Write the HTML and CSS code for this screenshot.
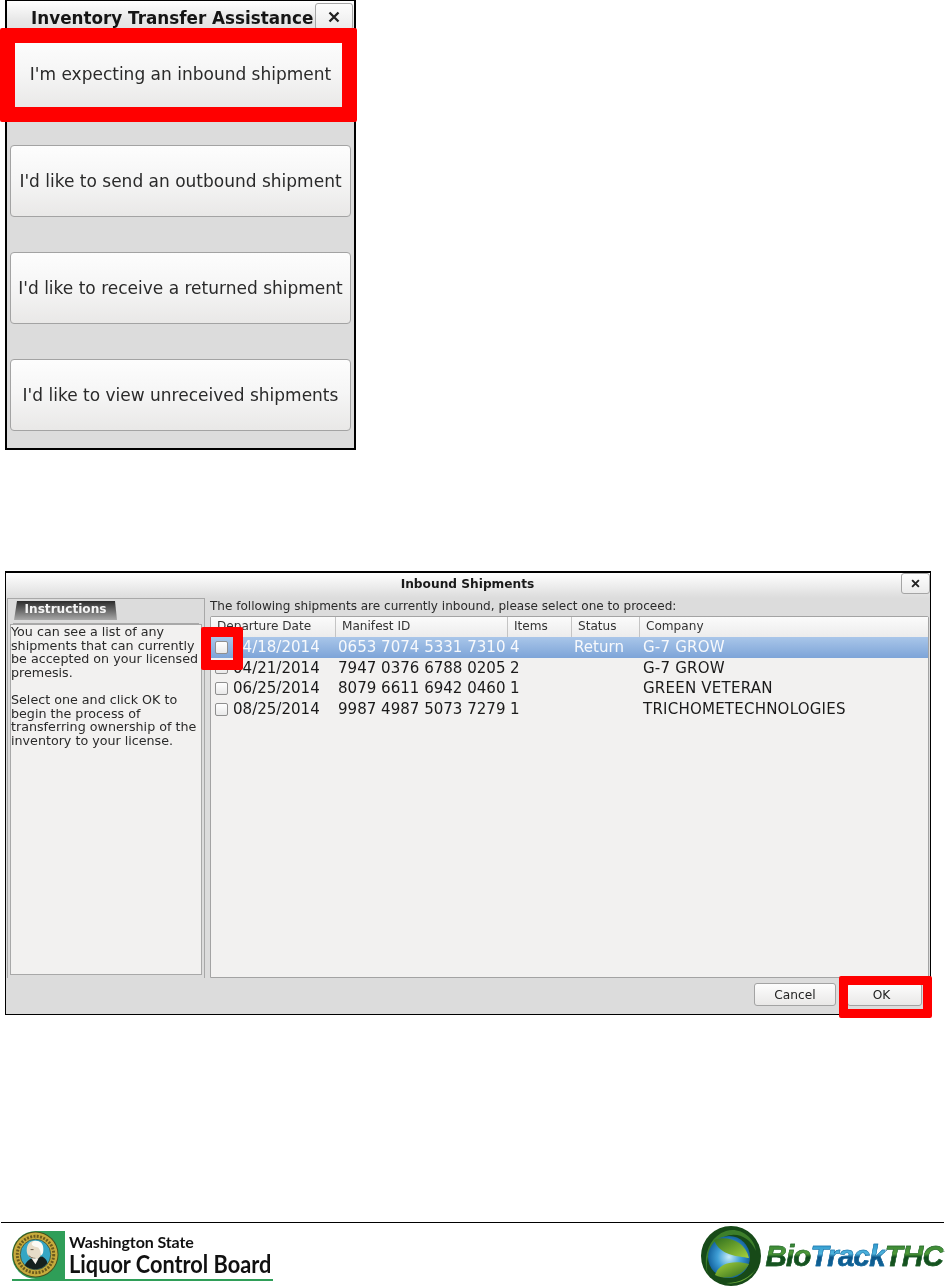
FILE: index.html
```html
<!DOCTYPE html>
<html lang="en">
<head>
<meta charset="utf-8">
<title>Inventory Transfer Assistance</title>
<link rel="stylesheet" href="styles.css">
</head>
<body>
<div class="page">
  <section class="transfer">
    <header class="transfer-title">
      <h1>Inventory Transfer Assistance</h1>
      <button class="close close-large" aria-label="Close">
        <svg viewBox="0 0 12 12" width="12" height="12" aria-hidden="true"><path d="M1.5 1.5l9 9M10.5 1.5l-9 9" stroke="#222" stroke-width="2.3" fill="none"/></svg>
      </button>
    </header>
    <div class="choices">
      <button class="choice">I'm expecting an inbound shipment</button>
      <button class="choice">I'd like to send an outbound shipment</button>
      <button class="choice">I'd like to receive a returned shipment</button>
      <button class="choice">I'd like to view unreceived shipments</button>
    </div>
  </section>

  <section class="inbound">
    <header class="inbound-title">
      <h2>Inbound Shipments</h2>
      <button class="close close-small" aria-label="Close">
        <svg viewBox="0 0 12 12" width="9" height="9" aria-hidden="true"><path d="M1.5 1.5l9 9M10.5 1.5l-9 9" stroke="#222" stroke-width="2.5" fill="none"/></svg>
      </button>
    </header>
    <div class="inbound-body">
      <aside class="side">
        <div class="tab">Instructions</div>
        <div class="note">
          <p>You can see a list of any shipments that can currently be accepted on your licensed premesis.</p>
          <p>Select one and click OK to begin the process of transferring ownership of the inventory to your license.</p>
        </div>
      </aside>
      <div class="main">
        <p class="lead">The following shipments are currently inbound, please select one to proceed:</p>
        <div class="table">
          <div class="thead">
            <span>Departure Date</span><span>Manifest ID</span><span>Items</span><span>Status</span><span>Company</span>
          </div>
          <div class="row selected">
            <span class="date"><i class="check"></i>04/18/2014</span><span>0653 7074 5331 7310</span><span>4</span><span>Return</span><span>G-7 GROW</span>
          </div>
          <div class="row">
            <span class="date"><i class="check"></i>04/21/2014</span><span>7947 0376 6788 0205</span><span>2</span><span></span><span>G-7 GROW</span>
          </div>
          <div class="row">
            <span class="date"><i class="check"></i>06/25/2014</span><span>8079 6611 6942 0460</span><span>1</span><span></span><span>GREEN VETERAN</span>
          </div>
          <div class="row">
            <span class="date"><i class="check"></i>08/25/2014</span><span>9987 4987 5073 7279</span><span>1</span><span></span><span>TRICHOMETECHNOLOGIES</span>
          </div>
        </div>
      </div>
    </div>
    <footer class="actions">
      <button class="action cancel">Cancel</button>
      <button class="action ok">OK</button>
    </footer>
  </section>

  <footer class="doc-footer">
    <div class="wslcb">
      <div class="seal-wrap">
        <svg class="seal" viewBox="0 0 48 48" width="47" height="47" aria-hidden="true">
          <circle cx="24" cy="24" r="23.5" fill="#45501f"/>
          <circle cx="24" cy="24" r="22.5" fill="#c7ab3c"/>
          <circle cx="24" cy="24" r="18.6" fill="none" stroke="#6b5a1c" stroke-width="3" stroke-dasharray="2 1.4"/>
          <circle cx="24" cy="24" r="15.6" fill="#35a6c4" stroke="#4a4a20" stroke-width=".8"/>
          <path d="M13 35c2-5 6-7 10-8l8-1c3 2 5 4 5 7-3 4-7 6-12 6-4 0-8-1-11-4z" fill="#16211e"/>
          <path d="M15 20c0-6 3-10 8-10 5 0 8 3 8 8 0 6-3 11-8 11-4 0-8-4-8-9z" fill="#e6dcc8"/>
          <path d="M24 10c5 0 8 3 8 8 0 3 0 5-2 7-1-3-1-6-3-8-3-1-6-1-7-4 1-2 2-3 4-3z" fill="#fbfaf5"/>
          <path d="M19 19l3 0M17 25c2 2 4 3 7 3" stroke="#5a4a38" stroke-width=".9" fill="none"/>
          <path d="M20 28l4 6 3-6z" fill="#f4f2ea"/>
        </svg>
      </div>
      <div class="wslcb-text">
        <span class="wslcb-state">Washington State</span>
        <span class="wslcb-board">Liquor Control Board</span>
      </div>
    </div>
    <div class="biotrack">
      <svg class="globe" viewBox="0 0 62 62" width="62" height="62" aria-hidden="true">
        <defs>
          <radialGradient id="sphere" cx="50%" cy="50%" r="50%">
            <stop offset="0" stop-color="#c8ecf8"/>
            <stop offset=".55" stop-color="#3f9fd6"/>
            <stop offset="1" stop-color="#14639f"/>
          </radialGradient>
          <linearGradient id="leafTop" x1="0" y1="0" x2="1" y2="1">
            <stop offset="0" stop-color="#2f6f1e"/>
            <stop offset="1" stop-color="#a6d23c"/>
          </linearGradient>
          <linearGradient id="leafBottom" x1="0" y1="0" x2="1" y2="1">
            <stop offset="0" stop-color="#a6d23c"/>
            <stop offset="1" stop-color="#2c6a1c"/>
          </linearGradient>
        </defs>
        <circle cx="31" cy="31" r="30" fill="#174a18"/>
        <path d="M8 50C2 34 8 12 26 6c14-4 28 6 30 20C50 12 36 6 24 12 10 18 4 36 8 50z" fill="#3d7f2a"/>
        <circle cx="29" cy="32" r="21" fill="url(#sphere)"/>
        <path d="M14 15c12-5 31 0 35 18C38 31 20 31 14 15z" fill="url(#leafTop)"/>
        <path d="M15 50c4-12 18-15 34-11-6 12-22 17-34 11z" fill="url(#leafBottom)"/>
        <path d="M56 44c-6 10-18 16-30 14 14 0 24-6 30-14z" fill="#6aa83a"/>
      </svg>
      <div class="wordmark"><span class="wm-green">Bio</span><span class="wm-blue">Track</span><span class="wm-green">THC</span></div>
    </div>
  </footer>

  <div class="mark mark-choice"></div>
  <div class="mark mark-check"></div>
  <div class="mark mark-ok"></div>
</div>
</body>
</html>
```

FILE: styles.css
```css
* { box-sizing: border-box; }
html, body { margin: 0; padding: 0; background: #fff; }
button { font: inherit; color: inherit; padding: 0; cursor: default; }
h1, h2, p { margin: 0; }

.page {
  position: relative;
  width: 946px;
  height: 1287px;
  overflow: hidden;
  display: flex;
  flex-direction: column;
  font-family: "DejaVu Sans", sans-serif;
  color: #1c1c1c;
}

/* first dialog */
.transfer {
  width: 351px;
  height: 450px;
  margin-left: 5px;
  border: 2px solid #000;
  border-top-width: 1px;
  background: #dcdcdc;
  display: flex;
  flex-direction: column;
  padding: 0 3px;
  flex: none;
  filter: blur(0.35px);
}
.transfer-title {
  height: 37px;
  margin: 0 -3px;
  background: linear-gradient(#fff, #e8e8e8 50%, #dcdcdc);
  display: flex;
  align-items: flex-start;
  padding-left: 24px;
  flex: none;
}
.transfer-title h1 {
  font-size: 16.8px;
  font-weight: 700;
  line-height: 35px;
  white-space: nowrap;
  width: 284px;
  color: #151515;
}
.close {
  background: linear-gradient(#fdfdfd, #ebebeb);
  border: 1px solid #a5a5a5;
  border-radius: 3px;
  color: #222;
  display: flex;
  align-items: center;
  justify-content: center;
}
.close-large { width: 38px; height: 27px; margin-top: 2px; }
.choices { display: flex; flex-direction: column; gap: 35px; }
.choice {
  height: 72px;
  background: linear-gradient(#fdfdfd, #f6f6f6 45%, #e9e8e7);
  border: 1px solid #a3a3a3;
  border-radius: 4px;
  font-size: 17px;
  color: #2a2a2a;
  white-space: nowrap;
}

/* second dialog */
.inbound {
  width: 926px;
  height: 444px;
  margin: 121px 0 0 5px;
  border: 1px solid #000;
  border-top-width: 2px;
  background: #dcdcdc;
  display: flex;
  flex-direction: column;
  flex: none;
  filter: blur(0.35px);
}
.inbound-title {
  height: 25px;
  background: linear-gradient(#fff, #dcdcdc);
  display: flex;
  align-items: flex-start;
  flex: none;
  padding-left: 28px;
}
.inbound-title h2 {
  flex: 1;
  text-align: center;
  font-size: 12.2px;
  font-weight: 700;
  line-height: 22px;
  color: #1a1a1a;
}
.close-small { width: 29px; height: 21px; margin-top: 0; }
.inbound-body { flex: 1; display: flex; min-height: 0; padding-left: 1px; }

.side {
  width: 198px;
  border: 1px solid #a8a8a8;
  border-bottom: 0;
  display: flex;
  flex-direction: column;
  padding-top: 2px;
  flex: none;
}
.tab {
  width: 103px;
  height: 19px;
  margin-left: 6px;
  flex: none;
  background: linear-gradient(#2b2b2b, #a8a8a8);
  clip-path: polygon(3px 0, calc(100% - 2px) 0, 100% 100%, 0 100%);
  color: #f4f4f4;
  font-size: 12.1px;
  font-weight: 700;
  line-height: 17px;
  text-align: center;
}
.note {
  flex: 1;
  margin: 4px 2px 3px 2px;
  background: #f2f1f0;
  border: 1px solid #a8a8a8;
  padding: 0;
  font-size: 12.7px;
  line-height: 13.6px;
  color: #2a2a2a;
  box-shadow: 0 -4px 0 -3px #a8a8a8;
}
.note p { margin-bottom: 13.6px; }

.main { flex: 1; min-width: 0; display: flex; flex-direction: column; padding-left: 5px; padding-right: 1px; }
.lead { font-size: 12.05px; line-height: 17px; height: 18px; color: #2a2a2a; white-space: nowrap; }
.table {
  flex: 1;
  background: #f2f1f0;
  border: 1px solid #a3a3a3;
  border-radius: 2px 2px 0 0;
  font-size: 15.05px;
}
.thead, .row { display: grid; grid-template-columns: 125px 172px 64px 68px 1fr; }
.thead {
  height: 20px;
  background: linear-gradient(#fbfbfb, #ececec);
  font-size: 12.1px;
  line-height: 19px;
  color: #333;
}
.thead span { padding-left: 6px; border-right: 1px solid #c4c4c4; }
.thead span:last-child { border-right: 0; }
.row { height: 20.7px; line-height: 21px; color: #1a1a1a; white-space: nowrap; }
.row span { padding-left: 2px; }
.row span:last-child { padding-left: 3px; letter-spacing: 0.2px; }
.row .date { padding-left: 4px; display: flex; align-items: center; }
.selected { background: linear-gradient(#a9c6e9, #7da4d8); color: #f7f9fc; }
.check {
  width: 13px;
  height: 13px;
  margin: -1px 5px 0 0;
  border: 1px solid #8f8f8f;
  border-radius: 2px;
  background: linear-gradient(#fff, #e9e9e9);
  flex: none;
}

.actions {
  height: 36px;
  flex: none;
  display: flex;
  align-items: flex-start;
  justify-content: flex-end;
  gap: 11px;
  padding: 5px 8px 0 0;
}
.action {
  height: 23px;
  background: linear-gradient(#fdfdfd, #e9e8e7);
  border: 1px solid #a3a3a3;
  border-radius: 3px;
  font-size: 12.2px;
  color: #222;
}
.cancel { width: 82px; }
.ok { width: 75px; padding-right: 6px; }

/* document footer */
.doc-footer {
  margin-top: 207px;
  margin-left: 1px;
  width: 943px;
  border-top: 1px solid #000;
  display: flex;
  justify-content: space-between;
  align-items: flex-start;
  flex: 1;
}
.wslcb {
  margin: 8px 0 0 11px;
  width: 261px;
  height: 50px;
  display: flex;
  border-bottom: 2px solid #2f9e58;
  filter: blur(0.4px);
}
.seal-wrap {
  width: 53px;
  height: 48px;
  background: #2f9e58;
  border-radius: 24px 0 0 24px;
  flex: none;
}
.seal { display: block; }
.wslcb-text {
  display: flex;
  flex-direction: column;
  align-items: flex-start;
  padding-left: 4px;
  color: #111;
  font-family: "Lato", sans-serif;
  font-weight: 700;
  white-space: nowrap;
}
.wslcb-state { font-size: 16px; line-height: 19px; margin-top: 1px; letter-spacing: -0.1px; }
.wslcb-board { font-size: 24px; line-height: 25px; transform: scaleX(0.905); transform-origin: left center; }

.biotrack { margin: 2px 1px 0 0; display: flex; align-items: center; gap: 3px; height: 62px; filter: blur(0.4px); }
.globe { display: block; flex: none; }
.wordmark {
  font-family: "Liberation Sans", sans-serif;
  font-style: italic;
  font-weight: 700;
  font-size: 29.5px;
  letter-spacing: -0.8px;
  line-height: 40px;
  white-space: nowrap;
}
.wm-green { background: linear-gradient(#2c7a34, #4f9a38 45%, #0f4a1c 55%, #1f5f25); -webkit-background-clip: text; background-clip: text; color: transparent; -webkit-text-stroke: 0.5px #1c5f28; }
.wm-blue { background: linear-gradient(#1f8cc4, #4fb4de 45%, #0c5588 55%, #146ea3); -webkit-background-clip: text; background-clip: text; color: transparent; -webkit-text-stroke: 0.5px #14699f; }

/* red call-outs over the screenshots */
.mark { position: absolute; border-style: solid; border-color: #f00; border-radius: 2px; }
.mark-choice { left: 0; top: 28px; width: 357px; height: 94px; border-width: 15px; }
.mark-check { left: 201px; top: 627px; width: 42px; height: 43px; border-width: 10px; }
.mark-ok { left: 839px; top: 976px; width: 93px; height: 42px; border-width: 9px; }
```
